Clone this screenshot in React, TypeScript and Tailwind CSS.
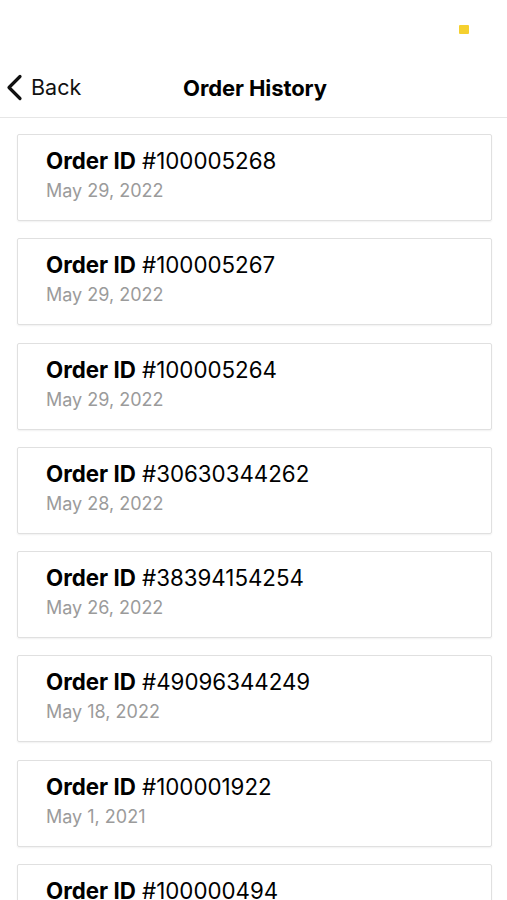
import React from 'react';

const orders = [
  { id: '100005268', date: 'May 29, 2022' },
  { id: '100005267', date: 'May 29, 2022' },
  { id: '100005264', date: 'May 29, 2022' },
  { id: '30630344262', date: 'May 28, 2022' },
  { id: '38394154254', date: 'May 26, 2022' },
  { id: '49096344249', date: 'May 18, 2022' },
  { id: '100001922', date: 'May 1, 2021' },
  { id: '100000494', date: 'Apr 12, 2021' },
];

const App: React.FC = () => {
  return (
    <div className="w-[507px] h-[900px] overflow-hidden bg-white font-['Inter',sans-serif] text-black">
      {/* Status bar */}
      <div className="h-[60px] flex justify-end pt-[25px] pr-[38px]">
        <div className="w-[10px] h-[9px] rounded-[1px] bg-[#f5d02f]" />
      </div>

      {/* Nav bar */}
      <div className="relative h-[58px] flex items-center justify-center border-b border-[#e6e6e6]">
        <button className="absolute left-[6px] top-[14px] flex items-center gap-[8px]">
          <svg width="17" height="27" viewBox="0 0 17 27" fill="none">
            <path d="M14 2.5 L3 13.5 L14 24.5" stroke="#111" strokeWidth="3.2" strokeLinecap="round" strokeLinejoin="round" />
          </svg>
          <span className="text-[21.5px] leading-[27px] text-[#111]">Back</span>
        </button>
        <h1 className="text-[22px] leading-[26px] font-bold tracking-[-0.1px] pl-[3px] -mt-[1px]">Order History</h1>
      </div>

      {/* Orders */}
      <div className="flex flex-col gap-[17.3px] pt-[16px]">
        {orders.map((o) => (
          <div
            key={o.id}
            className="ml-[17px] mr-[15px] h-[87px] shrink-0 border border-[#e0e0e0] rounded-[2px] shadow-[0_1px_2px_rgba(0,0,0,0.06)] pl-[28px] pt-[13px]"
          >
            <div className="text-[22.3px] leading-[26px]">
              <span className="font-bold">Order ID</span> #{o.id}
            </div>
            <div className="mt-[6px] text-[18px] leading-[22px] text-[#9b9b9b]">{o.date}</div>
          </div>
        ))}
      </div>
    </div>
  );
};

export default App;
